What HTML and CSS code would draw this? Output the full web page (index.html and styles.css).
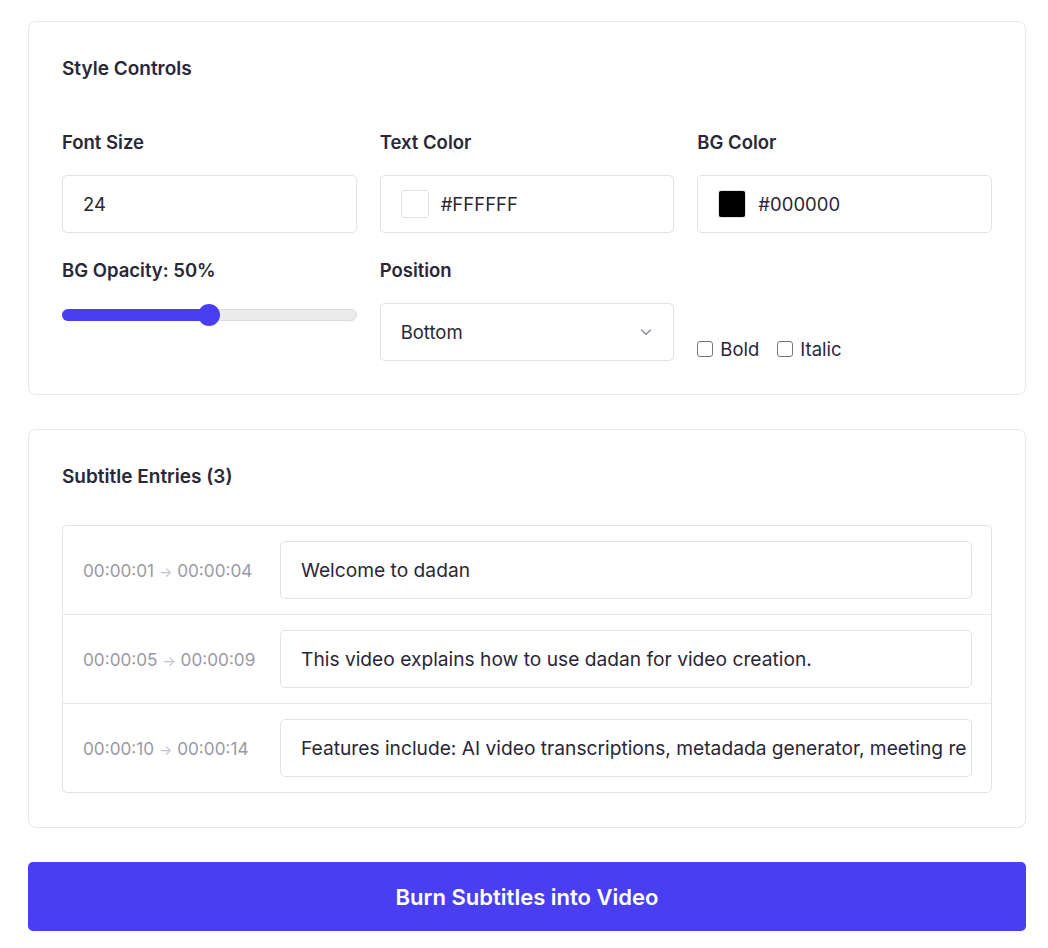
FILE: index.html
```html
<!DOCTYPE html>
<html lang="en">

<head>
    <meta charset="UTF-8">
    <meta name="viewport" content="width=device-width, initial-scale=1.0">
    <title>Burn Subtitles</title>
    <link rel="stylesheet" href="styles.css">
</head>

<body>
    <div class="wrap">
        <div class="card">
            <h3 class="card-title">Style Controls</h3>
            <div class="grid">
                <div class="field">
                    <label class="label">Font Size</label>
                    <input class="box" type="text" value="24">
                </div>
                <div class="field">
                    <label class="label">Text Color</label>
                    <div class="box color-box">
                        <span class="swatch swatch-white"></span>
                        <span>#FFFFFF</span>
                    </div>
                </div>
                <div class="field">
                    <label class="label">BG Color</label>
                    <div class="box color-box">
                        <span class="swatch swatch-black"></span>
                        <span>#000000</span>
                    </div>
                </div>

                <div class="field">
                    <label class="label">BG Opacity: 50%</label>
                    <div class="slider">
                        <div class="slider-fill" style="width: 50%"></div>
                        <div class="slider-thumb" style="left: 50%"></div>
                    </div>
                </div>
                <div class="field">
                    <label class="label">Position</label>
                    <div class="box select-box">
                        <span>Bottom</span>
                        <svg width="14" height="14" viewBox="0 0 14 14" fill="none">
                            <path d="M2.5 5 7 9.2 11.5 5" stroke="#8b8997" stroke-width="1.4" stroke-linecap="round" stroke-linejoin="round"/>
                        </svg>
                    </div>
                </div>
                <div class="field checks">
                    <label class="check"><span class="check-box"></span>Bold</label>
                    <label class="check"><span class="check-box"></span>Italic</label>
                </div>
            </div>
        </div>

        <div class="card card-entries">
            <h3 class="card-title">Subtitle Entries (3)</h3>
            <div class="entries">
                <div class="entry">
                    <div class="time">00:00:01 <span class="arrow">→</span> 00:00:04</div>
                    <input class="box entry-input" type="text" value="Welcome to dadan">
                </div>
                <div class="entry">
                    <div class="time">00:00:05 <span class="arrow">→</span> 00:00:09</div>
                    <input class="box entry-input" type="text" value="This video explains how to use dadan for video creation.">
                </div>
                <div class="entry">
                    <div class="time">00:00:10 <span class="arrow">→</span> 00:00:14</div>
                    <input class="box entry-input" type="text" value="Features include: AI video transcriptions, metadada generator, meeting recorder and more.">
                </div>
            </div>
        </div>

        <button class="burn-btn">Burn Subtitles into Video</button>
    </div>
</body>

</html>
```

FILE: styles.css
```css
* {
    box-sizing: border-box;
}

body {
    margin: 0;
    background: #fff;
    font-family: Inter, "Noto Sans", sans-serif;
    color: #2a2737;
}

.wrap {
    margin: 21px 22px 0 28px;
}

.card {
    border: 1px solid #e8e7ee;
    border-radius: 8px;
    padding: 33px;
}

.card-entries {
    margin-top: 34px;
    padding-bottom: 34px;
}

.card-title {
    margin: 0;
    font-size: 19px;
    line-height: 28px;
    font-weight: 600;
}

.grid {
    margin-top: 47px;
    display: grid;
    grid-template-columns: repeat(3, minmax(0, 1fr));
    column-gap: 23px;
    row-gap: 25px;
}

.field {
    display: flex;
    flex-direction: column;
}

.label {
    font-size: 18.5px;
    line-height: 24px;
    font-weight: 600;
    margin-bottom: 21px;
}

.box {
    width: 100%;
    height: 58px;
    border: 1.5px solid #e2e1ea;
    border-radius: 5px;
    padding: 0 20px;
    font-family: inherit;
    font-size: 18.5px;
    color: #2a2737;
    background: #fff;
    outline: none;
}

.color-box {
    display: flex;
    align-items: center;
    gap: 12px;
}

.swatch {
    width: 28px;
    height: 28px;
    border-radius: 3px;
    border: 1px solid #e2e1ea;
}

.swatch-white {
    background: #fff;
}

.swatch-black {
    background: #000;
}

.select-box {
    display: flex;
    align-items: center;
    justify-content: space-between;
    padding-right: 20px;
}

.slider {
    position: relative;
    height: 12px;
    margin-top: 6px;
    border-radius: 6px;
    background: #ececec;
    border: 1px solid #dcdcdc;
}

.slider-fill {
    position: absolute;
    left: -1px;
    top: -1px;
    bottom: -1px;
    border-radius: 6px;
    background: #4a3ff0;
}

.slider-thumb {
    position: absolute;
    top: 50%;
    width: 22px;
    height: 22px;
    margin: -11px 0 0 -11px;
    border-radius: 50%;
    background: #4a3ff0;
}

.checks {
    flex-direction: row;
    align-items: flex-end;
    gap: 18px;
}

.check {
    display: flex;
    align-items: center;
    gap: 7px;
    font-size: 18.5px;
    line-height: 24px;
}

.check-box {
    width: 16px;
    height: 16px;
    border: 1.5px solid #767480;
    border-radius: 3px;
}

.entries {
    margin-top: 34px;
    border: 1.5px solid #e2e1ea;
    border-radius: 5px;
}

.entry {
    display: flex;
    align-items: center;
    padding: 15px 19px 15px 20px;
    border-top: 1px solid #e8e7ee;
}

.entry:first-child {
    border-top: none;
}

.time {
    width: 197px;
    flex-shrink: 0;
    font-size: 17.2px;
    color: #9b99a6;
    white-space: nowrap;
}

.arrow {
    color: #c3c2cb;
    font-size: 14px;
}

.entry-input {
    flex: 1;
    min-width: 0;
    padding-right: 4px;
    font-size: 19.2px;
}

.burn-btn {
    display: block;
    width: 100%;
    height: 69px;
    margin-top: 34px;
    border: none;
    border-radius: 5px;
    background: #4a3ff0;
    color: #fff;
    font-family: inherit;
    font-size: 22px;
    font-weight: 600;
}
```
